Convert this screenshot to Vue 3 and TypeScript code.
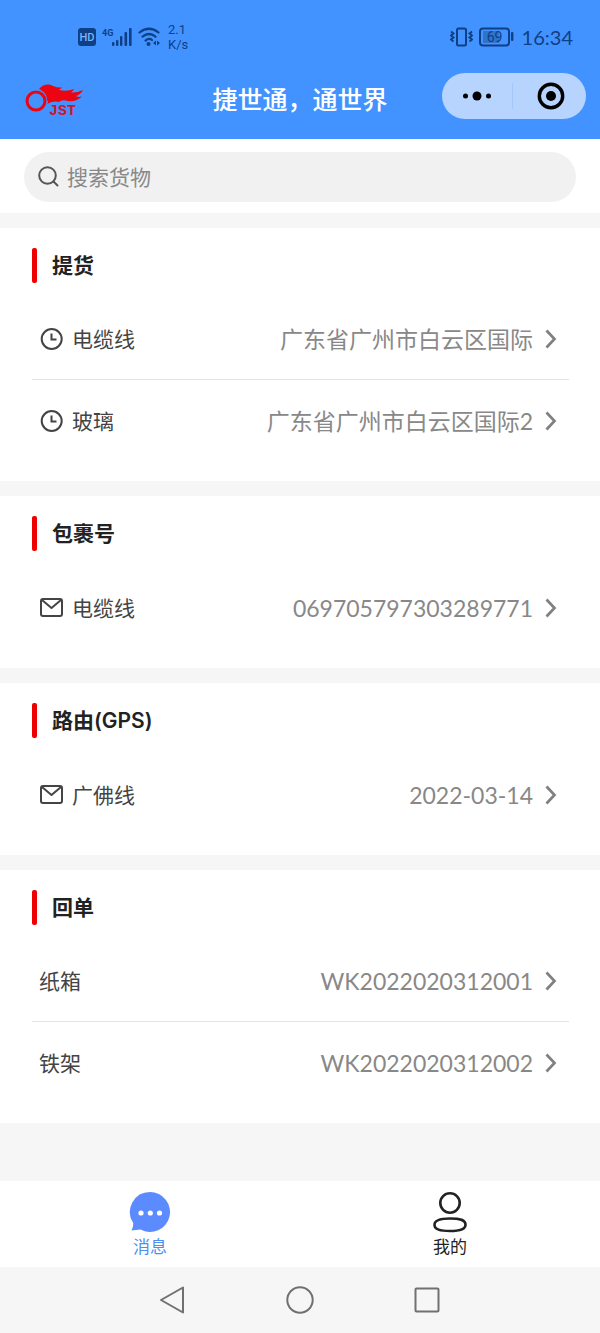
<script setup lang="ts">
import { ref } from 'vue'

type IconName = 'clock' | 'mail'

interface Row {
  label: string
  value: string
}

interface Section {
  title: string
  icon?: IconName
  rows: Row[]
}

const keyword = ref('')
const activeTab = ref<'message' | 'mine'>('message')

const sections: Section[] = [
  {
    title: '提货',
    icon: 'clock',
    rows: [
      { label: '电缆线', value: '广东省广州市白云区国际' },
      { label: '玻璃', value: '广东省广州市白云区国际2' },
    ],
  },
  {
    title: '包裹号',
    icon: 'mail',
    rows: [{ label: '电缆线', value: '069705797303289771' }],
  },
  {
    title: '路由(GPS)',
    icon: 'mail',
    rows: [{ label: '广佛线', value: '2022-03-14' }],
  },
  {
    title: '回单',
    rows: [
      { label: '纸箱', value: 'WK2022020312001' },
      { label: '铁架', value: 'WK2022020312002' },
    ],
  },
]
</script>

<template>
  <div class="page">
    <header class="top">
      <div class="status">
        <div class="status-group">
          <svg width="18" height="18" viewBox="0 0 18 18" aria-hidden="true">
            <rect width="18" height="18" rx="3" fill="#0f3f85" />
            <text x="9" y="13" text-anchor="middle" font-size="11" font-weight="500" fill="#7db4fb">HD</text>
          </svg>
          <svg width="30" height="20" viewBox="0 0 30 20" aria-hidden="true">
            <text x="0" y="9" font-size="9" font-weight="700" fill="#0f3f85">4G</text>
            <g fill="#0f3f85">
              <rect x="10" y="15" width="2.400" height="4" rx="1" />
              <rect x="14" y="13" width="2.400" height="6" rx="1" />
              <rect x="18" y="9" width="2.400" height="10" rx="1" />
              <rect x="22.500" y="5" width="2.600" height="14" rx="1" />
              <rect x="27" y="1" width="2.600" height="18" rx="1" />
            </g>
          </svg>
          <svg width="22" height="20" viewBox="0 0 22 20" aria-hidden="true">
            <g fill="none" stroke="#0f3f85" stroke-width="2.200" stroke-linecap="round">
              <path d="M1.500 5.500Q11 -2 20.500 5.500" />
              <path d="M4.500 9.700Q11 4.300 17.500 9.700" />
              <path d="M7.500 13.600Q11 10.600 14 13" />
            </g>
            <circle cx="10.500" cy="17" r="2" fill="#0f3f85" />
            <path d="M18 13.500v5l-3-2.500zM19 13.500v5l3-2.500z" fill="#0f3f85" />
          </svg>
          <div class="speed"><span>2.1</span><span>K/s</span></div>
        </div>
        <div class="status-group">
          <svg width="23" height="20" viewBox="0 0 23 20" aria-hidden="true">
            <g fill="none" stroke="#0f3f85" stroke-width="2">
              <rect x="7" y="1.500" width="9" height="17" rx="1.500" />
              <path d="M1 4.500l2.500 2-2.500 2 2.500 2-2.500 2 2.500 2M22 4.500l-2.500 2 2.500 2-2.500 2 2.500 2-2.500 2" stroke-width="1.900" />
            </g>
          </svg>
          <svg width="35" height="20" viewBox="0 0 35 20" aria-hidden="true">
            <rect x="1" y="1.500" width="29" height="17" rx="3" fill="none" stroke="#0f3f85" stroke-width="2" />
            <rect x="4" y="4" width="16" height="12" fill="#2f74cc" />
            <rect x="32" y="5" width="2.400" height="9" rx="1" fill="#0f3f85" />
            <text x="15.500" y="15" text-anchor="middle" font-size="14" fill="#0f3f85">69</text>
          </svg>
          <time class="time">16:34</time>
        </div>
      </div>
      <div class="nav">
        <div class="nav-side">
          <svg class="logo" width="60" height="42" viewBox="0 -5 60 42" role="img" aria-label="JST">
            <circle cx="11" cy="19" r="9" fill="none" stroke="#ec0410" stroke-width="3" />
            <path d="M14 7C18 2 24 1.500 28 4Q33 6 37 5.500Q35 7 34 8Q42 10 49 7Q48 9 46 10.500Q52 11 58 8Q56 12 51 14Q53 15.500 57 14.500C53 18 48 20 43 19Q37 17 34 20Q29 18.500 22 22Q24 20 22 18C22 12 18 9 14 7z" fill="#ec0410" />
            <text class="logo-text" x="24" y="33" font-size="15" font-weight="700" fill="#d3122a">JST</text>
          </svg>
        </div>
        <h1 class="title">捷世通，通世界</h1>
        <div class="nav-side end">
          <div class="capsule">
            <button type="button" aria-label="更多">
              <svg width="30" height="12" viewBox="0 0 30 12">
                <circle cx="3.500" cy="6" r="2.500" />
                <circle cx="15" cy="6" r="4.500" />
                <circle cx="26.500" cy="6" r="2.500" />
              </svg>
            </button>
            <i class="split"></i>
            <button type="button" class="close" aria-label="关闭">
              <svg width="28" height="28" viewBox="0 0 28 28">
                <circle cx="14" cy="14" r="11.700" fill="none" stroke="#000" stroke-width="3.400" />
                <circle cx="14" cy="14" r="5" />
              </svg>
            </button>
          </div>
        </div>
      </div>
    </header>

    <form class="search" role="search" @submit.prevent>
      <label class="search-box">
        <svg width="22" height="22" viewBox="0 0 22 22" aria-hidden="true">
          <g fill="none" stroke="#555" stroke-width="2" stroke-linecap="round">
            <circle cx="9.500" cy="9.500" r="8.300" />
            <path d="M15.500 15.500L19.500 19.500" />
          </g>
        </svg>
        <input v-model="keyword" type="search" placeholder="搜索货物" aria-label="搜索货物" />
      </label>
    </form>

    <main class="content">
      <section v-for="section in sections" :key="section.title" class="card">
        <h2 class="card-title">{{ section.title }}</h2>
        <ul class="rows">
          <li v-for="row in section.rows" :key="row.value" class="row-item">
            <a class="row" href="#">
              <svg v-if="section.icon === 'clock'" class="row-icon" width="24" height="24" viewBox="0 0 24 24" aria-hidden="true">
                <g fill="none" stroke="#444" stroke-width="2">
                  <circle cx="12.700" cy="12" r="10" />
                  <path d="M12.500 6.500V12.500H17.500" />
                </g>
              </svg>
              <svg v-else-if="section.icon === 'mail'" class="row-icon" width="24" height="24" viewBox="0 0 24 24" aria-hidden="true">
                <g fill="none" stroke="#444" stroke-width="2" stroke-linejoin="round">
                  <rect x="2" y="3" width="21" height="17" rx="2" />
                  <path d="M3 4L12.500 12L22 4" />
                </g>
              </svg>
              <span class="label">{{ row.label }}</span>
              <span class="value">{{ row.value }}</span>
              <svg class="chevron" width="12" height="20" viewBox="0 0 12 20" aria-hidden="true">
                <path d="M1.500 1.500L9.500 10L1.500 18.500" fill="none" stroke="#808080" stroke-width="2.700" />
              </svg>
            </a>
          </li>
        </ul>
      </section>
    </main>

    <nav class="tabs">
      <button type="button" class="tab" :class="{ active: activeTab === 'message' }" @click="activeTab = 'message'">
        <svg width="42" height="42" viewBox="0 0 42 42" aria-hidden="true">
          <path d="M21 1a20 20 0 1 1-9.500 37.600Q7 39 2.500 39.500Q4.500 36 4.200 32A20 20 0 0 1 21 1z" fill="#5b8bff" />
          <g fill="#fff">
            <circle cx="12" cy="22" r="2.600" />
            <circle cx="21.300" cy="22" r="2.600" />
            <circle cx="30.500" cy="22" r="2.600" />
          </g>
        </svg>
        <span>消息</span>
      </button>
      <button type="button" class="tab" :class="{ active: activeTab === 'mine' }" @click="activeTab = 'mine'">
        <svg width="42" height="42" viewBox="0 0 42 42" aria-hidden="true">
          <g fill="none" stroke="#222" stroke-width="2.600">
            <circle cx="21" cy="12" r="9.700" />
            <path d="M21 27.500C31 27.500 36.500 29 36.500 33.700C36.500 38.500 31 40 21 40C11 40 5.500 38.500 5.500 33.700C5.500 29 11 27.500 21 27.500z" />
          </g>
        </svg>
        <span>我的</span>
      </button>
    </nav>

    <footer class="system">
      <button type="button" aria-label="返回">
        <svg width="28" height="28" viewBox="0 0 28 28">
          <path d="M25 1.500V26.500L3 14z" />
        </svg>
      </button>
      <button type="button" aria-label="主页">
        <svg width="28" height="28" viewBox="0 0 28 28">
          <circle cx="14" cy="14" r="12.700" />
        </svg>
      </button>
      <button type="button" aria-label="最近任务">
        <svg width="28" height="28" viewBox="0 0 28 28">
          <rect x="1.500" y="2.500" width="23" height="23" rx="1" />
        </svg>
      </button>
    </footer>
  </div>
</template>

<style>
body {
  margin: 0;
  background: #f6f6f6;
}
</style>

<style scoped>
.page {
  display: flex;
  flex-direction: column;
  min-height: 100vh;
  background: #f6f6f6;
  font-family: Lato, "Noto Sans CJK SC", sans-serif;
  color: #444;
}

button {
  display: flex;
  align-items: center;
  justify-content: center;
  padding: 0;
  border: 0;
  background: none;
  font: inherit;
  color: inherit;
}

svg {
  flex: none;
  display: block;
}

.top {
  background: #4293ff;
  padding-bottom: 20px;
}

.status {
  display: flex;
  justify-content: space-between;
  align-items: center;
  height: 73px;
  padding: 0 27px 0 78px;
  box-sizing: border-box;
  color: #0f3f85;
  font-family: Roboto, sans-serif;
}

.status-group {
  display: flex;
  align-items: center;
  gap: 6px;
}

.speed {
  display: flex;
  flex-direction: column;
  margin-left: 2px;
  font-size: 13px;
  line-height: 15px;
}

.time {
  margin-left: 2px;
  font-family: Lato, sans-serif;
  font-size: 20px;
  line-height: 24px;
}

.nav {
  display: flex;
  align-items: center;
  justify-content: space-between;
  padding: 0 14px;
}

.nav-side {
  display: flex;
  flex: 1;
  align-items: center;
}

.nav-side.end {
  justify-content: flex-end;
}

.logo {
  margin: 4px 0 0 11px;
}

.logo-text {
  font-family: "Liberation Mono", monospace;
}

.title {
  margin: 6px 0 0;
  color: #fff;
  font-size: 25px;
  font-weight: 500;
  line-height: 36px;
  white-space: nowrap;
}

.capsule {
  display: flex;
  align-items: center;
  width: 144px;
  height: 46px;
  border-radius: 23px;
  background: #b7d4ff;
}

.capsule button {
  flex: 1;
  height: 100%;
}

.capsule .close {
  padding-left: 3px;
}

.split {
  width: 1px;
  height: 26px;
  background: #a5c6f8;
}

.search {
  padding: 13px 24px 11px;
  background: #fff;
}

.search-box {
  display: flex;
  align-items: center;
  gap: 7px;
  height: 50px;
  padding: 0 14px;
  border-radius: 25px;
  background: #f1f1f1;
}

.search-box input {
  flex: 1;
  min-width: 0;
  padding: 0;
  border: 0;
  outline: 0;
  background: none;
  color: #444;
  font: inherit;
  font-size: 21px;
  line-height: 32px;
}

.search-box input::placeholder {
  color: #888;
  opacity: 1;
}

.content {
  display: flex;
  flex: 1;
  flex-direction: column;
  gap: 15px;
  padding: 15px 0 57px;
}

.card {
  padding: 20px 31px 20px 32px;
  background: #fff;
}

.card-title {
  display: flex;
  gap: 15px;
  margin: 0 0 16px;
  color: #222;
  font-family: Inter, "Noto Sans CJK SC", sans-serif;
  font-size: 21px;
  font-weight: 600;
  line-height: 35px;
}

.card-title::before {
  content: "";
  width: 5px;
  border-radius: 2px;
  background: #ee0000;
}

.rows {
  margin: 0;
  padding: 0;
  list-style: none;
}

.row {
  display: flex;
  align-items: center;
  height: 81px;
  box-sizing: border-box;
  padding: 0 12px 0 7px;
  color: inherit;
  text-decoration: none;
}

.row-item:not(:last-child) .row {
  border-bottom: 1px solid #e4e4e4;
}

.row-icon {
  margin-right: 9px;
}

.label {
  font-size: 21px;
  line-height: 32px;
}

.value {
  flex: 1;
  text-align: right;
  color: #888;
  font-size: 23px;
  line-height: 32px;
}

.chevron {
  margin-left: 12px;
}

.tabs {
  display: flex;
  background: #fff;
}

.tab {
  flex: 1;
  flex-direction: column;
  gap: 1px;
  height: 86px;
  padding-top: 2px;
  color: #222;
  font-size: 17px;
  line-height: 26px;
}

.tab.active {
  color: #4a8ff0;
}

.system {
  display: flex;
  justify-content: center;
  align-items: center;
  gap: 100px;
  height: 66px;
}

.system svg {
  fill: none;
  stroke: #707070;
  stroke-width: 2;
  stroke-linejoin: round;
}
</style>
